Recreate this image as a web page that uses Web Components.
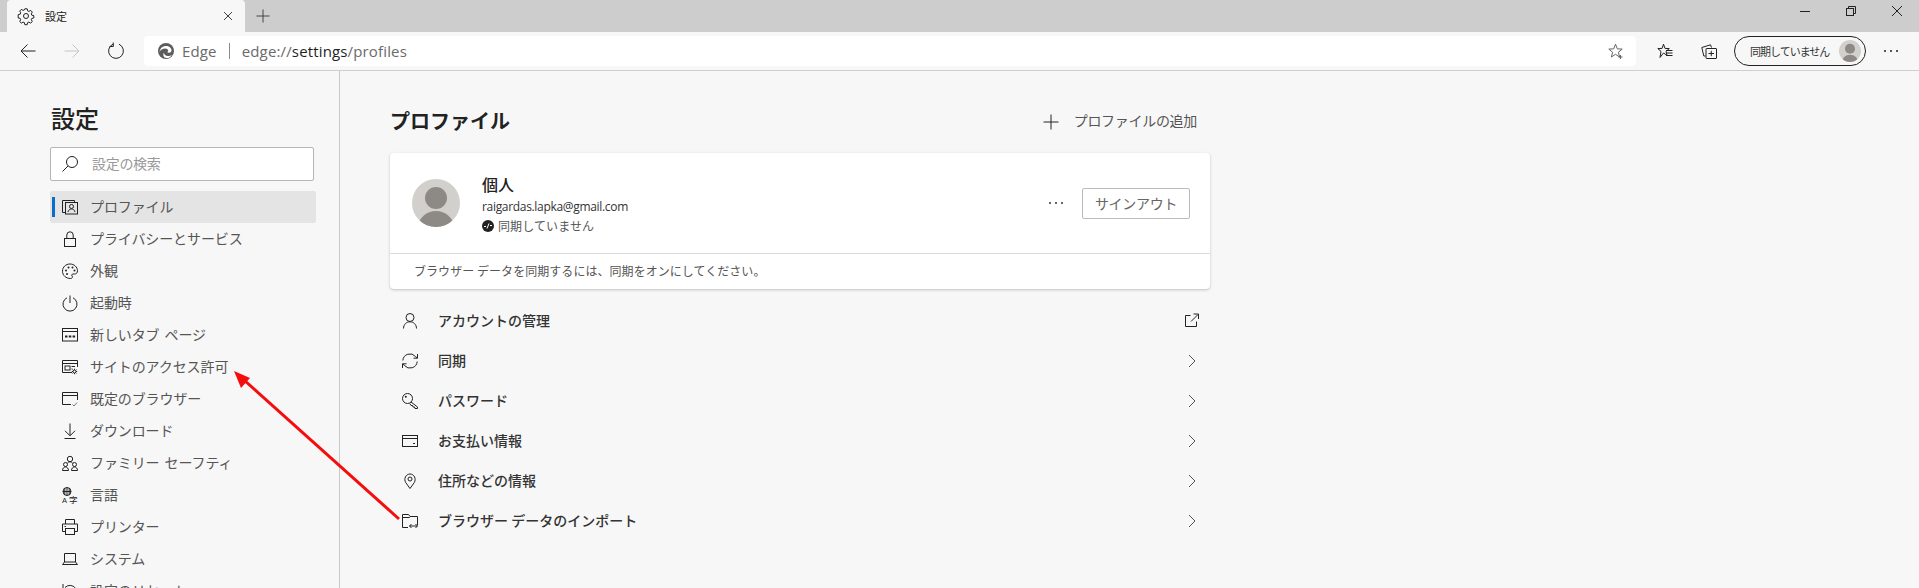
<!DOCTYPE html>
<html lang="ja">
<head>
<meta charset="utf-8">
<title>設定</title>
<style>
  html, body { margin: 0; height: 100%; }
  body {
    position: relative;
    height: 588px;
    overflow: hidden;
    background: #f7f7f7;
    color: #222;
    font-family: "Noto Sans CJK JP", "Noto Sans", sans-serif;
    font-size: 14px;
  }
</style>
</head>
<body>

<edge-tabstrip title-text="設定"></edge-tabstrip>
<edge-toolbar></edge-toolbar>

<settings-layout>
  <settings-nav slot="nav">
    <nav-item icon="profile" active>プロファイル</nav-item>
    <nav-item icon="lock">プライバシーとサービス</nav-item>
    <nav-item icon="palette">外観</nav-item>
    <nav-item icon="power">起動時</nav-item>
    <nav-item icon="newtab">新しいタブ ページ</nav-item>
    <nav-item icon="siteperm">サイトのアクセス許可</nav-item>
    <nav-item icon="browser">既定のブラウザー</nav-item>
    <nav-item icon="download">ダウンロード</nav-item>
    <nav-item icon="family">ファミリー セーフティ</nav-item>
    <nav-item icon="language">言語</nav-item>
    <nav-item icon="printer">プリンター</nav-item>
    <nav-item icon="laptop">システム</nav-item>
    <nav-item icon="reset">設定のリセット</nav-item>
  </settings-nav>

  <profile-page>
    <profile-card></profile-card>
    <profile-row icon="person" trail="external">アカウントの管理</profile-row>
    <profile-row icon="sync">同期</profile-row>
    <profile-row icon="key">パスワード</profile-row>
    <profile-row icon="card">お支払い情報</profile-row>
    <profile-row icon="pin">住所などの情報</profile-row>
    <profile-row icon="folder">ブラウザー データのインポート</profile-row>
  </profile-page>
</settings-layout>

<red-arrow></red-arrow>

<script>
(function() {

  const ICONS = {
    gear: '<circle cx="8" cy="8" r="2.5"/><path d="M6.8.8h2.4l.4 2 1.3.6 1.8-1 1.6 1.7-1 1.7.5 1.4 2 .4v2.4l-2 .4-.5 1.3 1 1.8-1.6 1.6-1.8-1-1.3.5-.4 2.1H6.8l-.4-2.1-1.3-.5-1.8 1-1.6-1.6 1-1.8-.5-1.3-2-.4V6.6l2-.4.5-1.4-1-1.7 1.6-1.7 1.8 1 1.3-.6z"/>',
    close: '<path d="M3.5 3.5l9 9M12.5 3.5l-9 9"/>',
    plus: '<path d="M8 .5v15M.5 8h15"/>',
    back: '<path d="M15.5 8H1M7.5 1.5L1 8l6.5 6.5"/>',
    forward: '<path d="M.5 8H15M8.5 1.5L15 8l-6.5 6.5"/>',
    refresh: '<path d="M5 1.2A7.4 7.4 0 1 0 11 1.2"/><path d="M5.2 -.5l.2 3.9-3.8.2"/>',
    star: '<path d="M7.5 1.2l1.8 4.6 4.9.3-3.8 3.1 1.2 4.8-4.1-2.7-4.1 2.7 1.2-4.8L.8 6.1l4.9-.3z"/><path d="M12.5 12v4M10.5 14h4"/>',
    favorites: '<path d="M6.5 1.2L8 5.4l4.3.2-3.3 2.7 1.1 4.1-3.6-2.4L3 14.5l1-6.2L.8 5.6l4.3-.2z"/><path d="M9 7.5h6.5M9 10h6.5M9 12.5h6.5"/>',
    collections: '<path d="M.8 4.5L9.5 1.8l1 2.7"/><path d="M.8 4.5l2 8.5h1.7"/><rect x="5" y="5.5" width="10.5" height="10" rx=".5"/><path d="M10.25 7.8v5.4M7.5 10.5h5.5"/>',
    dots: '<circle cx="2" cy="8" r="1" fill="currentColor" stroke="none"/><circle cx="8" cy="8" r="1" fill="currentColor" stroke="none"/><circle cx="14" cy="8" r="1" fill="currentColor" stroke="none"/>',
    glass: '<circle cx="6" cy="6" r="5.5"/><path d="M10 10L15.5 15.5"/>',
    profile: '<rect x="3.5" y="3.5" width="12" height="11.5"/><path d="M3.5 13.5h-3V1.5h12v2"/><circle cx="9.5" cy="7.5" r="2"/><path d="M6 13c.4-2 1.8-3 3.5-3s3.1 1 3.5 3"/>',
    lock: '<rect x="2.5" y="7.5" width="11" height="8"/><path d="M4.8 7.5V4a3.2 3.2 0 0 1 6.4 0v3.5"/>',
    palette: '<path d="M8 1c4 0 7.5 3 7.5 6.8 0 2.2-1.3 3.2-2.8 3.2H11c-1.2 0-1.6 1.1-.9 2 .8 1 .2 2.5-1.6 2.5C4 15.5.5 12.5.5 8.2.5 4 3.8 1 8 1z"/><circle cx="4" cy="7.5" r="1" fill="currentColor" stroke="none"/><circle cx="6.5" cy="4.5" r="1" fill="currentColor" stroke="none"/><circle cx="10.5" cy="4.5" r="1" fill="currentColor" stroke="none"/><circle cx="12.5" cy="7.5" r="1" fill="currentColor" stroke="none"/><circle cx="5" cy="11" r="1" fill="currentColor" stroke="none"/>',
    power: '<path d="M8 .5V8"/><path d="M5 2.8a7 7 0 1 0 6 0"/>',
    newtab: '<rect x=".5" y="1.5" width="15" height="12.5"/><path d="M.5 4.5h15"/><path d="M3 9.5h2.5M6.8 9.5h2.5M10.6 9.5h2.5" stroke-width="2"/>',
    siteperm: '<path d="M10 13.5H.5v-12h15V8"/><path d="M.5 4.5h15"/><rect x="3" y="7" width="5" height="4"/><path d="M9.5 7.5H13M9.5 10h1"/><circle cx="12.5" cy="12.5" r="1.5"/><path d="M12.5 9.8V11M12.5 14v1.2M9.8 12.5H11M14 12.5h1.2M10.6 10.6l.8.8M13.6 13.6l.8.8M10.6 14.4l.8-.8M13.6 11.4l.8-.8"/>',
    browser: '<path d="M9 13.5H.5v-12h15V9"/><path d="M.5 4.5h15"/><path d="M10.5 13.5L12 15l3-3.5" stroke="#777"/>',
    download: '<path d="M8 .5v12M3 7.8l5 5 5-5"/><path d="M2.5 15.500h11"/>',
    family: '<circle cx="8" cy="4" r="2.7"/><circle cx="3.5" cy="9.500" r="2"/><circle cx="12.5" cy="9.500" r="2"/><path d="M.5 15.500c0-2 1.200-3.500 3-3.500s3 1.500 3 3.500zM9.500 15.500c0-2 1.200-3.500 3-3.500s3 1.500 3 3.500z"/><path d="M5.500 7.800c.6-.6 1.500-1 2.500-1s1.900.4 2.500 1"/>',
    language: '<circle cx="5" cy="4.500" r="4"/><path d="M1 4.500h8M5 .5v8M2.800 1.300v6.400M7.200 1.300v6.400"/><text x="0" y="15.600" font-size="7.500" fill="currentColor" stroke="none" font-family="Liberation Sans">A</text><text x="7" y="15.500" font-size="8.500" fill="currentColor" stroke="none" font-family="Noto Sans CJK JP">字</text>',
    printer: '<path d="M3.500 5V.5h9V5"/><path d="M3.500 12.500H.5V5h15v7.500h-3"/><rect x="3.500" y="9.500" width="9" height="6"/><path d="M2.500 7.500H4"/>',
    laptop: '<path d="M2.500 11V2.500h11V11"/><path d="M.5 13.500h15L13.500 11h-11z"/>',
    reset: '<path d="M3 4.500A7 7 0 1 1 1 9.500"/><path d="M1 1v4.500h4.500"/>',
    person: '<circle cx="8" cy="4.500" r="4"/><path d="M1.500 15.500c0-4 2.900-6.700 6.500-6.700s6.500 2.700 6.500 6.700"/>',
    sync: '<path d="M.8 7.500A7.200 7.200 0 0 1 13.500 3.500L15.300 5"/><path d="M15.500 1v4.200h-4"/><path d="M15.200 8.500A7.200 7.200 0 0 1 2.500 12.500L.7 11"/><path d="M.5 15v-4.200h4"/>',
    key: '<circle cx="5.500" cy="5.500" r="5"/><circle cx="3.800" cy="3.800" r="1" fill="currentColor" stroke="none"/><path d="M9 9l6.500 5v1.500H13L12.500 14H11l-.5-1.500H9l-1.200-2"/>',
    card: '<rect x=".5" y="2.500" width="15" height="11"/><path d="M.5 5.500h15M11 10.500h2"/>',
    pin: '<path d="M8 15.500L3.700 9.500C1.500 6 3.800 1 8 1s6.500 5 4.300 8.500z"/><circle cx="8" cy="6" r="2"/>',
    folder: '<path d="M6 14.500H.5v-13h6L8 3.500h7.500V12"/><path d="M.5 4.500h7l1-1"/><path d="M7.500 13h8M9.500 11l-2 2 2 2M13.500 11l2 2-2 2"/>',
    external: '<path d="M6.500 2.500h-5v11h11v-5"/><path d="M7 8.500l7-7"/><path d="M9.500 1h5v5"/>',
    chevron: '<path d="M5 2l6 6-6 6"/>'
  };

  const avatarSvg = `<svg viewBox="0 0 48 48" width="100%" height="100%" style="display:block">
      <defs><clipPath id="c"><circle cx="24" cy="24" r="24"/></clipPath></defs>
      <circle cx="24" cy="24" r="24" fill="#d2d0cc"/>
      <g clip-path="url(#c)" fill="#8d8a86">
        <circle cx="24" cy="19" r="11"/>
        <ellipse cx="24" cy="49" rx="18" ry="17"/>
      </g>
    </svg>`;

  class AppIcon extends HTMLElement {
    connectedCallback() {
      if (this.shadowRoot) return;
      const size = this.getAttribute('size') || 16;
      const name = this.getAttribute('name');
      this.attachShadow({ mode: 'open' });
      this.shadowRoot.innerHTML = `
        <style>
          :host { display: block; flex: none; width: ${size}px; height: ${size}px; }
          svg { display: block; overflow: visible; fill: none; stroke: currentColor; stroke-width: 1; }
        </style>
        <svg viewBox="0 0 16 16" width="${size}" height="${size}">${ICONS[name] || ''}</svg>`;
    }
  }
  customElements.define('app-icon', AppIcon);

  class EdgeTabstrip extends HTMLElement {
    constructor() {
      super();
      this.attachShadow({ mode: 'open' });
      this.shadowRoot.innerHTML = `
        <style>
          :host { display: flex; height: 32px; background: #cdcdcd; padding-left: 7px; align-items: flex-end; }
          .tab {
            width: 238px; height: 32px; box-sizing: border-box; padding: 0 10px 0 11px;
            background: #f7f7f7; border-radius: 4px 4px 0 0;
            display: flex; align-items: center; gap: 11px; font-size: 11px; color: #222;
          }
          .tab span { flex: 1; }
          .new { margin: 0 0 0 11px; color: #333; align-self: center; }
          .win { margin-left: auto; display: flex; height: 32px; margin-right: -1px; }
          .win div { width: 46px; display: flex; justify-content: center; padding-top: 6px; box-sizing: border-box; }
          .win svg { fill: none; stroke: #222; display: block; }
        </style>
        <div class="tab">
          <app-icon name="gear"></app-icon>
          <span>${this.getAttribute('title-text')}</span>
          <app-icon name="close" size="14"></app-icon>
        </div>
        <app-icon class="new" name="plus" size="14"></app-icon>
        <div class="win">
          <div><svg width="10" height="10" viewBox="0 0 10 10"><path d="M0 5.500h10"/></svg></div>
          <div><svg width="10" height="10" viewBox="0 0 10 10"><rect x=".5" y="2.500" width="7" height="7"/><path d="M2.500 2.500v-2h7v7h-2"/></svg></div>
          <div><svg width="10" height="10" viewBox="0 0 10 10"><path d="M0 0l10 10M10 0L0 10"/></svg></div>
        </div>`;
    }
  }
  customElements.define('edge-tabstrip', EdgeTabstrip);

  class EdgeToolbar extends HTMLElement {
    constructor() {
      super();
      this.attachShadow({ mode: 'open' });
      this.shadowRoot.innerHTML = `
        <style>
          :host {
            display: flex; align-items: center; height: 39px; box-sizing: border-box;
            padding: 0 20px; gap: 28px; background: #f7f7f7; border-bottom: 1px solid #cfcfcf; color: #222;
          }
          .off { color: #c4c4c4; }
          .address {
            flex: 1; height: 30px; margin: 0 -7px 0 -8px; box-sizing: border-box; padding: 0 12px 0 14px;
            background: #fff; border-radius: 4px;
            display: flex; align-items: center; color: #6a6a6a;
            font-family: "Open Sans", sans-serif; font-size: 15px; letter-spacing: .15px;
          }
          .logo { width: 16px; height: 16px; margin-right: 8px; }
          .sep { width: 1px; height: 16px; background: #8a8a8a; margin: 0 12px; }
          .url b { font-weight: 400; color: #1f1f1f; }
          .star { margin-left: auto; color: #666; }
          .pill {
            width: 132px; height: 30px; box-sizing: border-box; margin: 0 -11px 0 -11px;
            border: 1px solid #222; border-radius: 15px;
            display: flex; align-items: center; padding: 0 4px 0 15px;
            font-family: "Noto Sans CJK JP", sans-serif; font-size: 11px; letter-spacing: -1px; color: #333;
          }
          .pill .av { width: 22px; height: 22px; margin-left: auto; }
        </style>
        <app-icon name="back"></app-icon>
        <app-icon class="off" name="forward"></app-icon>
        <app-icon name="refresh"></app-icon>
        <div class="address">
          <svg class="logo" viewBox="0 0 16 16"><circle cx="8" cy="8" r="8" fill="#5c5c5c"/><path d="M1.500 9c.5-4 3.500-6 6.500-6 3.200 0 5.500 2 5.500 4.500 0 1.300-1 2.200-2.500 2.200-1 0-1.600-.3-1.800-.6.500-.2 1-.7 1-1.500C10.200 6.500 9 5.500 7.300 5.500 4.500 5.500 2.500 7 1.500 9z" fill="#fff"/><path d="M6 9.500c0 2 1.500 3.500 4 3.500 1.600 0 3-.5 4-1.600-.8 2.500-3.300 3.700-5.500 3.600C5.500 14.800 4.500 12 6 9.500z" fill="#fff"/></svg>
          <span>Edge</span><i class="sep"></i>
          <span class="url">edge://<b>settings</b>/profiles</span>
          <app-icon class="star" name="star"></app-icon>
        </div>
        <app-icon name="favorites"></app-icon>
        <app-icon name="collections"></app-icon>
        <div class="pill"><span>同期していません</span><div class="av">${avatarSvg}</div></div>
        <app-icon name="dots"></app-icon>`;
    }
  }
  customElements.define('edge-toolbar', EdgeToolbar);

  class SettingsLayout extends HTMLElement {
    constructor() {
      super();
      this.attachShadow({ mode: 'open' });
      this.shadowRoot.innerHTML = `
        <style>
          :host { display: grid; grid-template-columns: 340px 1fr; height: 517px; overflow: hidden; }
        </style>
        <slot name="nav"></slot>
        <slot></slot>`;
    }
  }
  customElements.define('settings-layout', SettingsLayout);

  class SettingsNav extends HTMLElement {
    constructor() {
      super();
      this.attachShadow({ mode: 'open' });
      this.shadowRoot.innerHTML = `
        <style>
          :host {
            display: block; box-sizing: border-box; height: 517px; overflow: hidden;
            padding: 31px 23px 0 50px; border-right: 1px solid #c8c8c8;
          }
          h1 { margin: 0 0 0 1px; font-size: 24px; line-height: 32px; font-weight: 500; color: #222; }
          .search {
            margin: 13px 2px 10px 0; height: 34px; box-sizing: border-box; padding-left: 11px;
            background: #fff; border: 1px solid #b5b5b5; border-radius: 2px;
            display: flex; align-items: center; gap: 14px; color: #999; font-size: 14px; letter-spacing: -.3px;
          }
          .search span { margin-top: -2px; }
          .search app-icon { color: #222; transform: scaleX(-1); }
        </style>
        <h1>設定</h1>
        <div class="search"><app-icon name="glass"></app-icon><span>設定の検索</span></div>
        <slot></slot>`;
    }
  }
  customElements.define('settings-nav', SettingsNav);

  class NavItem extends HTMLElement {
    connectedCallback() {
      if (this.shadowRoot) return;
      this.attachShadow({ mode: 'open' });
      this.shadowRoot.innerHTML = `
        <style>
          :host {
            display: flex; align-items: center; position: relative; height: 32px; box-sizing: border-box;
            padding-left: 12px; gap: 12px; border-radius: 2px; color: #555;
            font-size: 14px; letter-spacing: -.1px; word-spacing: 2px;
          }
          :host([active]) { background: #e4e4e4; }
          :host([active])::before {
            content: ""; position: absolute; left: 2px; top: 6px; width: 3px; height: 20px; background: #0a6fc9;
          }
          app-icon { color: #222; }
          span { margin-top: -2px; }
        </style>
        <app-icon name="${this.getAttribute('icon')}"></app-icon>
        <span><slot></slot></span>`;
    }
  }
  customElements.define('nav-item', NavItem);

  class ProfilePage extends HTMLElement {
    constructor() {
      super();
      this.attachShadow({ mode: 'open' });
      this.shadowRoot.innerHTML = `
        <style>
          :host { display: block; width: 820px; margin-left: 50px; padding-top: 37px; }
          .head { display: flex; align-items: center; justify-content: space-between; height: 28px; margin: 0 13px 17px 0; }
          h2 { margin: -2px 0 0; font-size: 20px; line-height: 28px; font-weight: 700; color: #222; }
          .add { display: flex; align-items: center; gap: 15px; color: #555; letter-spacing: -.3px; }
          .add span { margin-top: -5px; }
          .add app-icon { color: #222; }
        </style>
        <div class="head">
          <h2>プロファイル</h2>
          <div class="add"><app-icon name="plus"></app-icon><span>プロファイルの追加</span></div>
        </div>
        <slot></slot>`;
    }
  }
  customElements.define('profile-page', ProfilePage);

  class ProfileCard extends HTMLElement {
    constructor() {
      super();
      this.attachShadow({ mode: 'open' });
      this.shadowRoot.innerHTML = `
        <style>
          :host {
            display: block; height: 136px; margin-bottom: 12px; background: #fff; border-radius: 4px;
            box-shadow: 0 1px 3px rgba(0,0,0,.22);
          }
          .top { height: 100px; display: flex; align-items: center; padding: 0 20px 0 22px; border-bottom: 1px solid #dcdcdc; }
          .av { width: 48px; height: 48px; margin-right: 22px; flex: none; }
          .info { padding-top: 2px; }
          .name { font-size: 16px; line-height: 22px; font-weight: 500; color: #222; }
          .mail { margin-top: 3px; font-family: "Open Sans", sans-serif; font-size: 12px; line-height: 18px; letter-spacing: -.32px; color: #333; }
          .sync { display: flex; align-items: center; gap: 4px; font-size: 12px; line-height: 20px; letter-spacing: .1px; color: #555; }
          .sync svg { width: 12px; height: 12px; flex: none; }
          .dots { margin-left: auto; margin-right: 18px; color: #333; }
          button {
            width: 108px; height: 31px; padding: 0; background: #fff; border: 1px solid #bbb; border-radius: 2px;
            font: inherit; font-size: 14px; letter-spacing: -.3px; color: #666;
          }
          .foot { padding-left: 24px; margin-top: -1px; font-size: 12px; line-height: 35px; color: #555; letter-spacing: .05px; }
        </style>
        <div class="top">
          <div class="av">${avatarSvg}</div>
          <div class="info">
            <div class="name">個人</div>
            <div class="mail">raigardas.lapka@gmail.com</div>
            <div class="sync">
              <svg viewBox="0 0 12 12"><circle cx="6" cy="6" r="6" fill="#222"/><path d="M2 6.500h2M8 5.500h2M5 8.500l2-5" stroke="#fff" fill="none"/></svg>
              <span>同期していません</span>
            </div>
          </div>
          <app-icon class="dots" name="dots"></app-icon>
          <button type="button">サインアウト</button>
        </div>
        <div class="foot">ブラウザー データを同期するには、同期をオンにしてください。</div>`;
    }
  }
  customElements.define('profile-card', ProfileCard);

  class ProfileRow extends HTMLElement {
    connectedCallback() {
      if (this.shadowRoot) return;
      this.attachShadow({ mode: 'open' });
      const trail = this.getAttribute('trail') || 'chevron';
      this.shadowRoot.innerHTML = `
        <style>
          :host {
            display: flex; align-items: center; height: 40px; padding: 0 10px 0 12px; gap: 20px;
            font-size: 14px; font-weight: 500; color: #333;
          }
          app-icon { color: #222; }
          span { margin-top: -2px; }
          .trail { margin-left: auto; }
          .chevron { color: #555; }
        </style>
        <app-icon name="${this.getAttribute('icon')}"></app-icon>
        <span><slot></slot></span>
        <app-icon class="trail ${trail}" name="${trail}"></app-icon>`;
    }
  }
  customElements.define('profile-row', ProfileRow);

  // annotation drawn over the page
  class RedArrow extends HTMLElement {
    constructor() {
      super();
      this.attachShadow({ mode: 'open' });
      this.shadowRoot.innerHTML = `
        <style>
          :host { position: absolute; left: 0; top: 0; width: 1919px; height: 588px; pointer-events: none; }
          svg { display: block; }
        </style>
        <svg width="1919" height="588">
          <path d="M399 519L244 380" stroke="#f50d0d" stroke-width="3"/>
          <path d="M234 371L250 378L241 388z" fill="#f50d0d"/>
        </svg>`;
    }
  }
  customElements.define('red-arrow', RedArrow);

})();
</script>
</body>
</html>
